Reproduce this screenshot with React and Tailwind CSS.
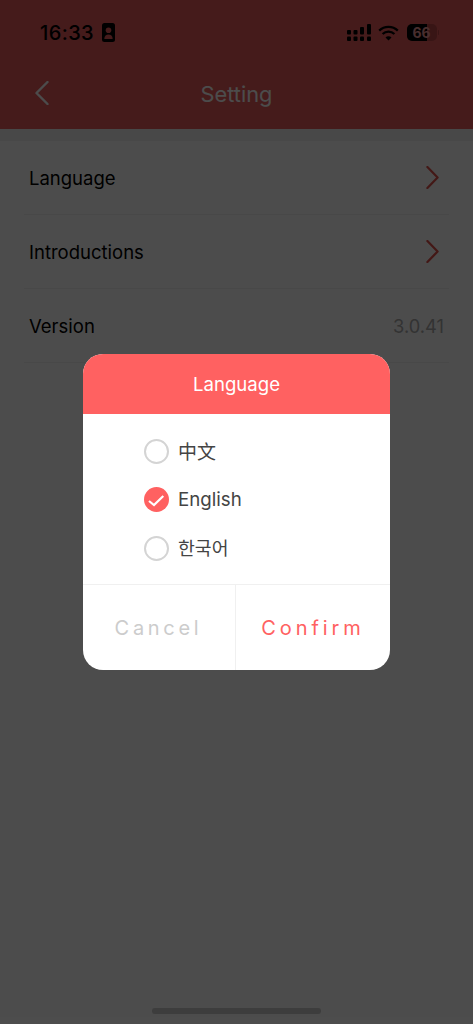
// App.jsx — Setting screen with the language dialog open

import { useState } from 'react'

const FONT = "font-['Inter','Noto_Sans_CJK_KR','Noto_Sans_CJK_SC',sans-serif]"

const LANGUAGES = [
  { id: 'zh', label: '中文', font: "font-['Noto_Sans_CJK_SC',sans-serif] text-[19px]" },
  { id: 'en', label: 'English', font: 'text-[18.7px] translate-y-[1px]' },
  { id: 'ko', label: '한국어', font: "font-['Noto_Sans_CJK_KR',sans-serif] text-[18.3px]" },
]

function StatusBar() {
  return (
    <div className="h-[64px] pl-[40px] pr-[34px] flex items-center justify-between pt-[1px]">
      <div className="flex items-center gap-[8px]">
        <span className="text-[20px] font-medium leading-none text-black tracking-[0.4px]">16:33</span>
        <svg width="13" height="19" viewBox="0 0 13 19">
          <rect x="0" y="0" width="13" height="19" rx="2.5" fill="#000" />
          <circle cx="6.5" cy="7.2" r="2.8" fill="#e65a5a" />
          <path d="M2.3 16c0-3 1.9-4.4 4.2-4.4s4.2 1.4 4.2 4.4z" fill="#e65a5a" />
        </svg>
      </div>
      <div className="flex items-center gap-[7px]">
        <svg width="24" height="17" viewBox="0 0 24 17">
          <g fill="#000">
            <rect x="0" y="6" width="4" height="4.5" rx="1" />
            <rect x="0" y="12.5" width="4" height="4.5" rx="1" />
            <rect x="6.5" y="6" width="4" height="4.5" rx="1" />
            <rect x="6.5" y="12.5" width="4" height="4.5" rx="1" />
            <rect x="13" y="3" width="4" height="7.5" rx="1" />
            <rect x="13" y="12.5" width="4" height="4.5" rx="1" />
            <rect x="20" y="0" width="4" height="10.5" rx="1" />
            <rect x="20" y="12.5" width="4" height="4.5" rx="1" />
          </g>
        </svg>
        <svg width="21" height="16" viewBox="0 0 21 16" fill="none" stroke="#000" strokeWidth="2.3">
          <path d="M1.2 5.6a13.4 13.4 0 0 1 18.6 0" />
          <path d="M4.6 9a8.6 8.6 0 0 1 11.8 0" />
          <path d="M10.5 15.6l-3-3.2a4.2 4.2 0 0 1 6 0z" fill="#000" stroke="none" />
        </svg>
        <div className="flex items-center gap-[1px] ml-[1px]">
          <div className="relative w-[30px] h-[17px] rounded-[5px] bg-[#bb4848] overflow-hidden">
            <div className="h-full w-[20px] bg-black" />
            <span className="absolute inset-0 flex items-center justify-center text-[14px] font-bold leading-none text-[#f09a9a]">66</span>
          </div>
          <div className="w-[1.5px] h-[5px] rounded-r-full bg-[#bb4848]" />
        </div>
      </div>
    </div>
  )
}

function Chevron({ dir = 'right', className, width = 14, height = 24 }) {
  return (
    <svg width={width} height={height} viewBox="0 0 14 24" preserveAspectRatio="none" fill="none" stroke="currentColor" strokeWidth="2.4" strokeLinecap="round" strokeLinejoin="round" className={className}>
      {dir === 'right'
        ? <path d="M1.5 1 L12.5 12 L1.5 23" />
        : <path d="M12.5 1 L1.5 12 L12.5 23" />}
    </svg>
  )
}

function Row({ label, value }) {
  return (
    <div className="h-[74px] flex items-center justify-between border-b border-[#f1f1f1] px-[5px]">
      <span className="text-[18.5px] text-black translate-y-[1px]">{label}</span>
      {value
        ? <span className="text-[18.3px] text-[#aaa] translate-y-[1px]">{value}</span>
        : <Chevron width={13} height={23} className="text-[#e0504a] mr-[5px]" />}
    </div>
  )
}

function LanguageDialog() {
  const [lang, setLang] = useState('en')

  return (
    <div className="w-[307px] h-[316px] bg-white rounded-[20px] overflow-hidden flex flex-col">
      <div className="h-[60px] pt-[2px] bg-[#ff6161] flex items-center justify-center text-white text-[18.6px]">Language</div>
      <div className="h-[170px] pt-[12.75px] pl-[61px] flex flex-col">
        {LANGUAGES.map(l => (
          <button key={l.id} onClick={() => setLang(l.id)} className="h-[48.5px] flex items-center gap-[9px] text-[#444]">
            {lang === l.id
              ? (
                <svg width="25" height="25" viewBox="0 0 25 25">
                  <circle cx="12.5" cy="12.5" r="12.5" fill="#ff6161" />
                  <path d="M5 14 L10 18 L19.3 9" fill="none" stroke="#fff" strokeWidth="2.2" />
                </svg>
              )
              : <span className="w-[25px] h-[25px] rounded-full border-2 border-[#d4d4d4]" />}
            <span className={l.font}>{l.label}</span>
          </button>
        ))}
      </div>
      <div className="flex-1 flex border-t border-[#f0f0f0]">
        <button className="w-[153px] pr-[1px] border-r border-[#f0f0f0] text-[20px] tracking-[3.7px] text-[#ccc]">Cancel</button>
        <button className="flex-1 text-[20px] tracking-[3.9px] text-[#ff6161]">Confirm</button>
      </div>
    </div>
  )
}

export default function App() {
  return (
    <div className={`relative w-[473px] h-[1024px] overflow-hidden bg-white ${FONT}`}>
      {/* Page under the dialog */}
      <div className="bg-[#e65a5a] h-[129px]">
        <StatusBar />
        <div className="relative h-[60px] flex items-center justify-center">
          <Chevron dir="left" className="absolute left-[35px] top-[17px] text-white" />
          <span className="text-white text-[21.8px]">Setting</span>
        </div>
      </div>
      <div className="h-[12px] bg-[#f0f0f0]" />
      <div className="px-[24px]">
        <Row label="Language" />
        <Row label="Introductions" />
        <Row label="Version" value="3.0.41" />
      </div>

      {/* Dim layer and dialog */}
      <div className="absolute inset-0 bg-black/70 flex items-center justify-center">
        <LanguageDialog />
      </div>

      {/* Home indicator */}
      <div className="absolute bottom-[10px] left-[152px] w-[169px] h-[6px] rounded-full bg-[#3d3d3d]" />
    </div>
  )
}
